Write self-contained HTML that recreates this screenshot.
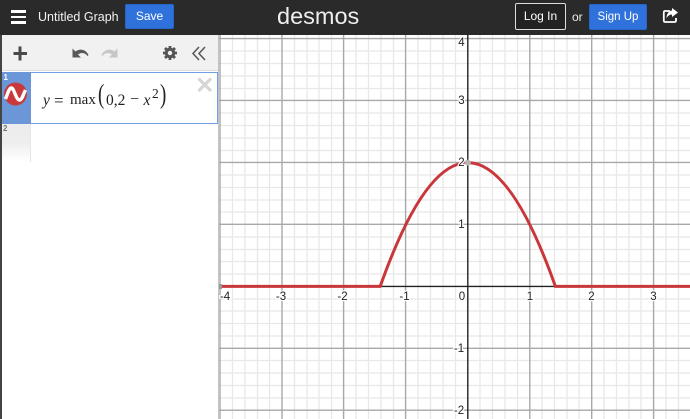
<!DOCTYPE html>
<html><head><meta charset="utf-8"><style>
html,body{margin:0;padding:0;width:690px;height:419px;overflow:hidden;background:#fff;font-family:"Liberation Sans",sans-serif}
.a{position:absolute}
svg{position:absolute;overflow:visible}
.btn{position:absolute;box-sizing:border-box;background:#2f72dc;color:#fff;font-size:12px;border-radius:2px;text-align:center;border:1px solid #2766c8}
.m{position:absolute;font-family:"Liberation Serif",serif;color:#222;white-space:nowrap}
</style></head><body>
<svg width="690" height="419" style="left:0;top:0">
<g id="minor" stroke="#e8e8e8" stroke-width="1.3">
<path d="M232.5 35V419M245 35V419M257.5 35V419M269.5 35V419M294.5 35V419M307 35V419M319 35V419M331.5 35V419M356 35V419M368.5 35V419M381 35V419M393.5 35V419M418 35V419M430.5 35V419M443 35V419M455.5 35V419M480 35V419M492.5 35V419M505 35V419M517.5 35V419M542 35V419M554.5 35V419M567 35V419M579 35V419M604 35V419M616.5 35V419M629 35V419M641 35V419M666 35V419M678.5 35V419"/>
<path d="M218 51H690M218 63.5H690M218 76H690M218 88.5H690M218 113H690M218 125.5H690M218 138H690M218 150.5H690M218 175H690M218 187.5H690M218 200H690M218 212H690M218 237H690M218 249.5H690M218 261.5H690M218 274H690M218 299H690M218 311H690M218 323.5H690M218 336H690M218 360.5H690M218 373H690M218 385.5H690M218 398H690"/>
</g>
<g stroke="#a8a8a8" stroke-width="1.4">
<path d="M220 35V419M282 35V419M343.6 35V419M405.6 35V419M529.8 35V419M591.7 35V419M653.6 35V419"/>
<path d="M218 38.6H690M218 100.4H690M218 162.4H690M218 224.3H690M218 348.3H690M218 410.2H690"/>
</g>
<path d="M218 286.4H690M467.8 35V419" stroke="#222" stroke-width="1.4" fill="none"/>
<path d="M218 286.4H380.2Q467.8 38.8 555.4 286.4H690" fill="none" stroke="#c9373a" stroke-width="3"/>
<circle cx="467.8" cy="162.6" r="3" fill="#b5b5b5"/>
<rect x="218" y="284" width="4" height="5" fill="#999"/>
<g font-family="'Liberation Sans',sans-serif" font-size="11.5" fill="#222" stroke="#fff" stroke-width="2.5" paint-order="stroke">
<text x="225" y="300" text-anchor="middle">-4</text>
<text x="281" y="300" text-anchor="middle">-3</text>
<text x="342.5" y="300" text-anchor="middle">-2</text>
<text x="404.5" y="300" text-anchor="middle">-1</text>
<text x="462" y="300" text-anchor="middle">0</text>
<text x="530" y="300" text-anchor="middle">1</text>
<text x="591.5" y="300" text-anchor="middle">2</text>
<text x="653.5" y="300" text-anchor="middle">3</text>
<text x="461.5" y="46" text-anchor="middle">4</text>
<text x="461.5" y="104" text-anchor="middle">3</text>
<text x="461.5" y="166" text-anchor="middle">2</text>
<text x="461.5" y="228" text-anchor="middle">1</text>
<text x="459" y="352" text-anchor="middle">-1</text>
<text x="459" y="414" text-anchor="middle">-2</text>
</g>
</svg>

<div class="a" style="left:0;top:35px;width:218px;height:384px;background:#fff;border-right:1px solid #c4c4c4;box-sizing:content-box"></div>
<div class="a" style="left:0;top:35px;width:2px;height:384px;background:#444"></div>
<div class="a" style="left:2px;top:35px;width:216px;height:36px;background:#f1f1f1;border-bottom:1px solid #ddd;box-sizing:border-box"></div>

<svg width="218" height="40" style="left:0;top:35px">
<path d="M20 11.5V25.5M13.5 18.5H27" stroke="#4a4a4a" stroke-width="3" fill="none"/>
<path d="M72.5 13.5V22.5H81L78 19.500C81.500 17 85 17.500 87.500 21L88.500 20C86 14.500 80 13 75.500 16.500Z" fill="#595959"/>
<path d="M117.500 13.500V22.500H109L112 19.500C108.500 17 105 17.500 102.500 21L101.500 20C104 14.500 110 13 114.500 16.500Z" fill="#c6c6c6"/>
<g transform="translate(170,18)" fill="#555">
<circle r="5.300"/>
<g stroke="#555" stroke-width="2.800"><path d="M0-7V7M-7 0H7M-5-5L5 5M-5 5L5-5"/></g>
<circle r="2.200" fill="#f1f1f1"/>
</g>
<path d="M199 12L193 18.500L199 25M205 12L199 18.500L205 25" fill="none" stroke="#555" stroke-width="1.500"/>
</svg>

<div class="a" style="left:2px;top:124px;width:29px;height:38px;background:linear-gradient(#ececec 0%,#eeeeee 50%,#fff 100%);border-right:1px solid #e6e6e6;box-sizing:border-box"></div>
<div class="a" style="left:3px;top:123.500px;font-size:8px;color:#777;font-weight:bold">2</div>

<div class="a" style="left:2px;top:72px;width:216px;height:52px;box-sizing:border-box;border:1px solid #6f9fe6;background:#fff"></div>
<div class="a" style="left:2px;top:72px;width:29px;height:52px;background:#6b97d8"></div>
<div class="a" style="left:3.500px;top:73px;font-size:8px;color:#fff;font-weight:bold">1</div>
<svg width="30" height="30" style="left:1px;top:80px">
<circle cx="14.500" cy="14" r="11.500" fill="#c9383a"/>
<path d="M4.500 19C7 13 8 8 10.500 8C13 8 15 20 18.500 20C21 20 22 15 24.500 10" fill="none" stroke="#fff" stroke-width="3.400"/>
</svg>
<svg width="18" height="18" style="left:196px;top:76px"><path d="M2.500 2.500L15 15M15 2.500L2.500 15" stroke="#d6d6d6" stroke-width="3.200"/></svg>

<div class="m" style="left:43px;top:92px;font-size:15.500px;font-style:italic">y</div>
<div class="m" style="left:54px;top:91px;font-size:17px">=</div>
<div class="m" style="left:70px;top:92px;font-size:15px">max</div>
<div class="m" style="left:98px;top:79px;font-size:27px;transform:scaleX(.7);transform-origin:left top">(</div>
<div class="m" style="left:106px;top:92px;font-size:15.500px">0,2</div>
<div class="m" style="left:130px;top:91px;font-size:16px">−</div>
<div class="m" style="left:143.500px;top:92px;font-size:15.500px;font-style:italic">x</div>
<div class="m" style="left:152px;top:85.500px;font-size:13.500px">2</div>
<div class="m" style="left:159.500px;top:79px;font-size:27px;transform:scaleX(.7);transform-origin:left top">)</div>

<div class="a" style="left:0;top:0;width:690px;height:35px;background:#2a2a2a"></div>
<div class="a" style="left:11px;top:10px;width:15px;height:2.500px;background:#fff"></div>
<div class="a" style="left:11px;top:15.500px;width:15px;height:2.500px;background:#fff"></div>
<div class="a" style="left:11px;top:21px;width:15px;height:2.500px;background:#fff"></div>
<div class="a" style="left:38px;top:9.500px;font-size:12.500px;color:#f2f2f2;white-space:nowrap">Untitled Graph</div>
<div class="btn" style="left:125px;top:4px;width:49px;height:25px;line-height:23px">Save</div>
<div class="a" style="left:277px;top:3px;font-size:23.500px;line-height:27px;color:#eee;white-space:nowrap">desmos</div>
<div class="a" style="left:515px;top:3px;width:51px;height:27px;box-sizing:border-box;border:1px solid #ddd;border-radius:2px;color:#fff;font-size:12px;line-height:25px;text-align:center;background:#222">Log In</div>
<div class="a" style="left:572px;top:10px;font-size:12px;color:#eee">or</div>
<div class="btn" style="left:589px;top:4px;width:58px;height:26px;line-height:24px;font-size:11.500px">Sign Up</div>
<svg width="20" height="20" style="left:661px;top:7px">
<path d="M9 4H4C3 4 2.800 4.500 2.800 5.500V13.500C2.800 14.500 3.300 15 4.300 15H13.500C14.500 15 15 14.500 15 13.500V11" fill="none" stroke="#fff" stroke-width="1.800"/>
<path d="M11 1L17 5.500L11 10V7.500C8.500 7.500 6.500 9 5.500 11.500C5.500 7 7.500 4 11 3.500Z" fill="#fff"/>
</svg>
</body></html>
